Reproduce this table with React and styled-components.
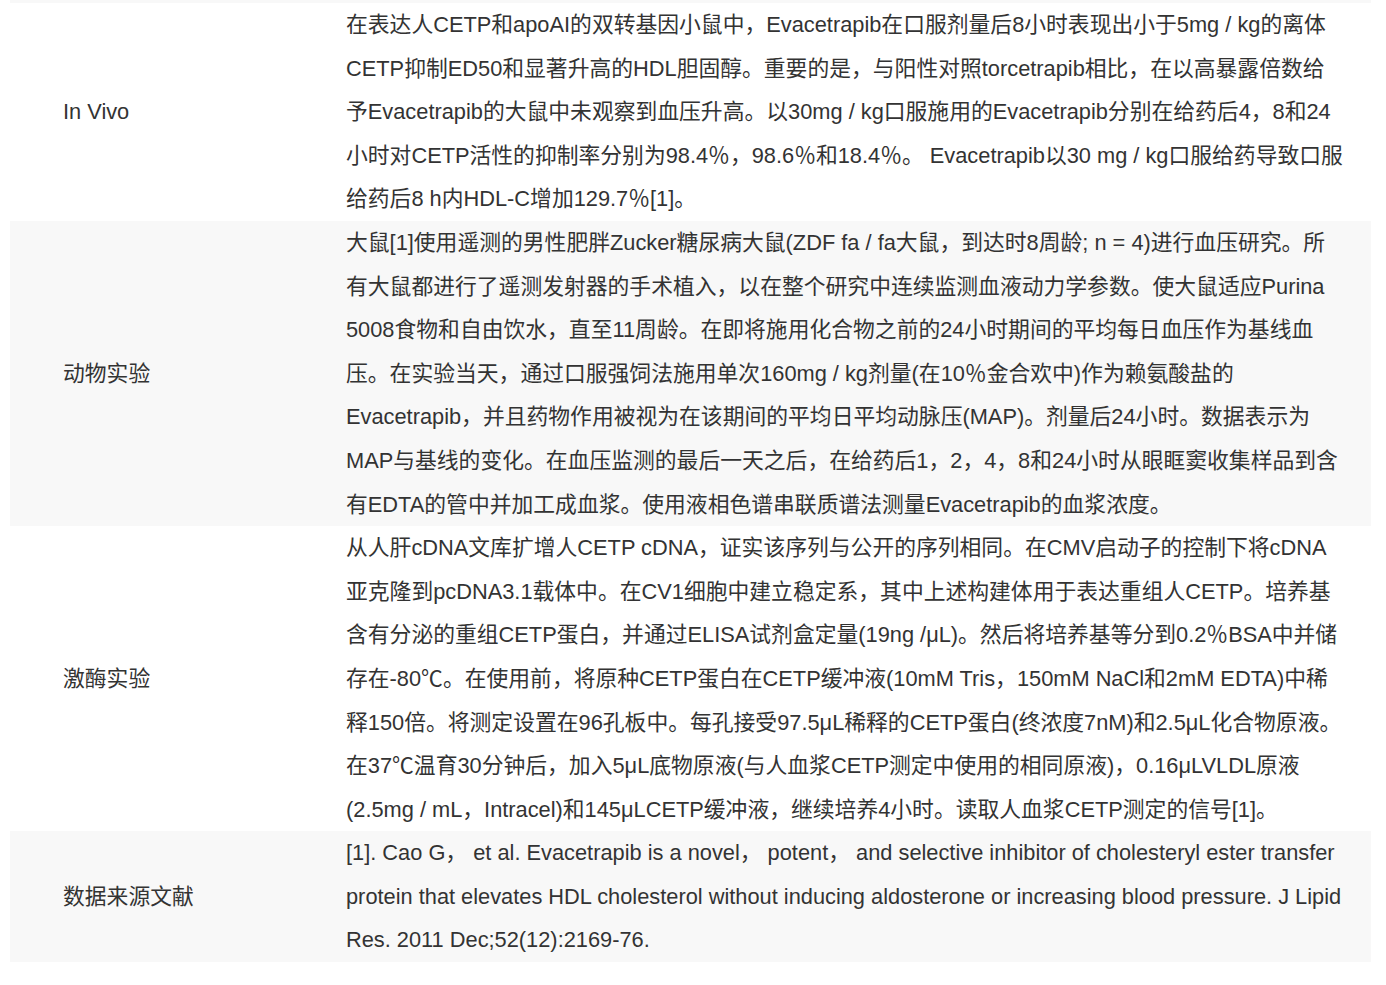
import React from 'react';
import styled, { createGlobalStyle } from 'styled-components';

const GlobalStyle = createGlobalStyle`
  body {
    margin: 0;
    background: #ffffff;
    font-family: "Liberation Sans", Arial, "Noto Sans CJK SC", sans-serif;
  }
`;

// lines are split as they wrap on the source page
const rows = [
  {
    label: 'In Vivo',
    lines: [
      '在表达人CETP和apoAI的双转基因小鼠中，Evacetrapib在口服剂量后8小时表现出小于5mg / kg的离体',
      'CETP抑制ED50和显著升高的HDL胆固醇。重要的是，与阳性对照torcetrapib相比，在以高暴露倍数给',
      '予Evacetrapib的大鼠中未观察到血压升高。以30mg / kg口服施用的Evacetrapib分别在给药后4，8和24',
      '小时对CETP活性的抑制率分别为98.4％，98.6％和18.4％。 Evacetrapib以30 mg / kg口服给药导致口服',
      '给药后8 h内HDL-C增加129.7％[1]。',
    ],
  },
  {
    label: '动物实验',
    lines: [
      '大鼠[1]使用遥测的男性肥胖Zucker糖尿病大鼠(ZDF fa / fa大鼠，到达时8周龄; n = 4)进行血压研究。所',
      '有大鼠都进行了遥测发射器的手术植入，以在整个研究中连续监测血液动力学参数。使大鼠适应Purina',
      '5008食物和自由饮水，直至11周龄。在即将施用化合物之前的24小时期间的平均每日血压作为基线血',
      '压。在实验当天，通过口服强饲法施用单次160mg / kg剂量(在10％金合欢中)作为赖氨酸盐的',
      'Evacetrapib，并且药物作用被视为在该期间的平均日平均动脉压(MAP)。剂量后24小时。数据表示为',
      'MAP与基线的变化。在血压监测的最后一天之后，在给药后1，2，4，8和24小时从眼眶窦收集样品到含',
      '有EDTA的管中并加工成血浆。使用液相色谱串联质谱法测量Evacetrapib的血浆浓度。',
    ],
  },
  {
    label: '激酶实验',
    lines: [
      '从人肝cDNA文库扩增人CETP cDNA，证实该序列与公开的序列相同。在CMV启动子的控制下将cDNA',
      '亚克隆到pcDNA3.1载体中。在CV1细胞中建立稳定系，其中上述构建体用于表达重组人CETP。培养基',
      '含有分泌的重组CETP蛋白，并通过ELISA试剂盒定量(19ng /μL)。然后将培养基等分到0.2％BSA中并储',
      '存在-80℃。在使用前，将原种CETP蛋白在CETP缓冲液(10mM Tris，150mM NaCl和2mM EDTA)中稀',
      '释150倍。将测定设置在96孔板中。每孔接受97.5μL稀释的CETP蛋白(终浓度7nM)和2.5μL化合物原液。',
      '在37℃温育30分钟后，加入5μL底物原液(与人血浆CETP测定中使用的相同原液)，0.16μLVLDL原液',
      '(2.5mg / mL，Intracel)和145μLCETP缓冲液，继续培养4小时。读取人血浆CETP测定的信号[1]。',
    ],
  },
  {
    label: '数据来源文献',
    lines: [
      '[1]. Cao G，  et al. Evacetrapib is a novel，  potent，  and selective inhibitor of cholesteryl ester transfer',
      'protein that elevates HDL cholesterol without inducing aldosterone or increasing blood pressure. J Lipid',
      'Res. 2011 Dec;52(12):2169-76.',
    ],
  },
];

const App = () => (
  <>
    <GlobalStyle />
    <Page>
      <Table>
        <CutRow />
        {rows.map((row, i) => (
          <Row key={row.label} $striped={i % 2 === 1}>
            <Label>{row.label}</Label>
            <Content>
              {row.lines.map((line) => (
                <Line key={line}>{line}</Line>
              ))}
            </Content>
          </Row>
        ))}
      </Table>
    </Page>
  </>
);

export default App;

const Page = styled.div`
  padding: 0 15px 0 10px;
`;

const Table = styled.div`
  display: flex;
  flex-direction: column;
  width: 1361px;
  color: #333333;
  font-family: "Liberation Sans", Arial, "Noto Sans CJK SC", sans-serif;
  font-size: 21.8px;
  line-height: 43.6px;
`;

const CutRow = styled.div`
  height: 3px;
  background: #f8f8f8;
`;

const Row = styled.div`
  display: grid;
  grid-template-columns: 336px 1fr;
  align-items: center;
  background: ${(p) => (p.$striped ? '#f8f8f8' : '#ffffff')};
`;

const Label = styled.div`
  padding-left: 53px;
`;

const Content = styled.div`
  display: flex;
  flex-direction: column;
  padding-right: 20px;
`;

const Line = styled.span`
  white-space: nowrap;
`;
